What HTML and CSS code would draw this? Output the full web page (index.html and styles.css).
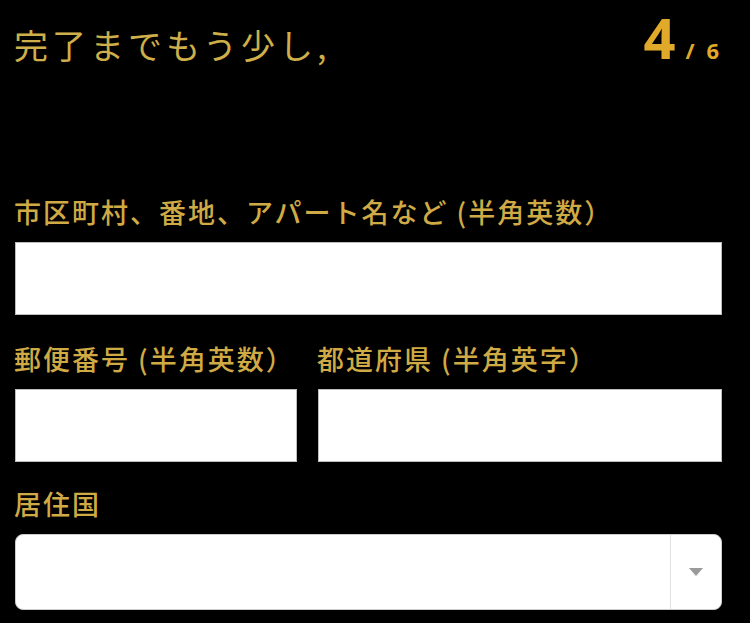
FILE: index.html
```html
<!DOCTYPE html>
<html lang="ja">
<head>
<meta charset="utf-8">
<link rel="stylesheet" href="styles.css">
</head>
<body>
<div class="page">
  <header class="head">
    <h1 class="title">完了までもう少し,</h1>
    <div class="step"><span class="cur">4</span><span class="tot">/ 6</span></div>
  </header>
  <form class="form">
    <div class="field field-wide">
      <label class="label">市区町村、番地、アパート名など (半角英数）</label>
      <input class="input" type="text">
    </div>
    <div class="row">
      <div class="field">
        <label class="label">郵便番号 (半角英数）</label>
        <input class="input" type="text">
      </div>
      <div class="field">
        <label class="label">都道府県 (半角英字）</label>
        <input class="input" type="text">
      </div>
    </div>
    <div class="field">
      <label class="label">居住国</label>
      <div class="select">
        <div class="select-value"></div>
        <div class="select-arrow"><svg width="14" height="8" viewBox="0 0 14 8"><path d="M0 0h14L7 8z" fill="#9a9a9a"/></svg></div>
      </div>
    </div>
  </form>
</div>
</body>
</html>
```
FILE: styles.css
```css
html, body {
  margin: 0;
  padding: 0;
  background: #000;
}
.page {
  padding: 0 28px 0 15px;
  font-family: "Noto Sans CJK JP", "Noto Sans", sans-serif;
  color: #d2aa42;
}
.head {
  display: flex;
  justify-content: space-between;
  align-items: baseline;
  height: 194px;
}
.title {
  margin: 23px 0 0 -1px;
  font-size: 34px;
  font-weight: 400;
  letter-spacing: 4px;
  line-height: 44px;
  color: #cfaf4a;
}
.step {
  font-family: "Open Sans", "Liberation Sans", sans-serif;
  font-weight: 700;
  color: #e0a92a;
  white-space: nowrap;
}
.cur {
  font-size: 56px;
  line-height: 44px;
}
.tot {
  font-size: 22px;
  margin-left: 10px;
  letter-spacing: 3px;
}
.form {
  display: flex;
  flex-direction: column;
}
.field {
  display: flex;
  flex-direction: column;
}
.label {
  font-size: 27px;
  font-weight: 500;
  letter-spacing: 2px;
  line-height: 36px;
  margin: 0 0 12px -1px;
  color: #cfaa45;
  white-space: nowrap;
}
.input {
  box-sizing: border-box;
  display: block;
  width: 100%;
  height: 73px;
  margin: 0;
  border: 1px solid #bdbdbd;
  border-radius: 0;
  background: #fff;
}
.field-wide {
  margin-bottom: 26px;
}
.row {
  display: grid;
  grid-template-columns: 282px 1fr;
  column-gap: 21px;
  margin-bottom: 24px;
}
.select {
  display: flex;
  height: 76px;
  background: #fff;
  border-radius: 8px;
  border: 1px solid #ccc;
  box-sizing: border-box;
}
.select-value {
  flex: 1;
}
.select-arrow {
  width: 50px;
  border-left: 1px solid #e2e2e2;
  display: flex;
  align-items: center;
  justify-content: center;
}
```
